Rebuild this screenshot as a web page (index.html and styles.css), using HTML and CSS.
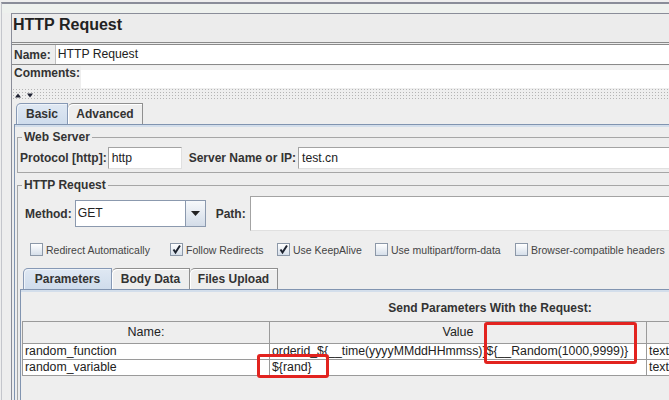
FILE: index.html
```html
<!DOCTYPE html>
<html lang="en">
<head>
<meta charset="utf-8">
<title>HTTP Request</title>
<link rel="stylesheet" href="styles.css">
</head>
<body>
<div class="app">
  <div class="topstrip"></div>
  <div class="panel">
    <div class="title">HTTP Request</div>
    <div class="row name-row">
      <span class="lbl">Name:</span>
      <div class="field name-field">HTTP Request</div>
    </div>
    <div class="row comments-row">
      <span class="lbl">Comments:</span>
      <div class="field comments-field"></div>
    </div>
    <div class="splitter">
      <svg class="split-arrows" width="18" height="5" viewBox="0 0 18 5"><path d="M0 4.5 L3 0.5 L6 4.5 Z"/><path d="M12 0.5 L18 0.5 L15 4.5 Z"/></svg>
    </div>
    <div class="tabs outer-tabs">
      <div class="tab sel t-basic">Basic</div>
      <div class="tab t-adv">Advanced</div>
    </div>
    <div class="tabbody outer-body">
      <fieldset class="group ws">
        <legend>Web Server</legend>
        <div class="frow">
          <span class="lbl">Protocol [http]:</span>
          <div class="field tf proto">http</div>
          <span class="lbl server-lbl">Server Name or IP:</span>
          <div class="field tf server">test.cn</div>
        </div>
      </fieldset>
      <fieldset class="group hr">
        <legend>HTTP Request</legend>
        <div class="method-row">
          <span class="lbl">Method:</span>
          <div class="combo">
            <div class="combo-text">GET</div>
            <div class="combo-btn"><svg width="9" height="5" viewBox="0 0 9 5"><path d="M0 0 H9 L4.5 5 Z"/></svg></div>
          </div>
          <span class="lbl path-lbl">Path:</span>
          <div class="field tf path"></div>
        </div>
        <div class="checks">
          <div class="chk c1"><span class="box"></span>Redirect Automatically</div>
          <div class="chk c2"><span class="box"><svg width="11" height="11" viewBox="0 0 11 11"><path d="M2.5 5.5 L4.5 8.5 L9 1.5"/></svg></span>Follow Redirects</div>
          <div class="chk c3"><span class="box"><svg width="11" height="11" viewBox="0 0 11 11"><path d="M2.5 5.5 L4.5 8.5 L9 1.5"/></svg></span>Use KeepAlive</div>
          <div class="chk c4"><span class="box"></span>Use multipart/form-data</div>
          <div class="chk c5"><span class="box"></span>Browser-compatible headers</div>
        </div>
        <div class="tabs inner-tabs">
          <div class="tab sel t-params">Parameters</div>
          <div class="tab t-body">Body Data</div>
          <div class="tab t-files">Files Upload</div>
        </div>
        <div class="tabbody inner-body">
          <div class="heading">Send Parameters With the Request:</div>
          <table class="params">
            <colgroup><col class="col-name"><col class="col-value"><col class="col-ct"></colgroup>
            <thead>
              <tr><th>Name:</th><th>Value</th><th></th></tr>
            </thead>
            <tbody>
              <tr><td>random_function</td><td>orderid_${__time(yyyyMMddHHmmss)}${__Random(1000,9999)}</td><td>text/plain</td></tr>
              <tr><td>random_variable</td><td>${rand}</td><td>text/plain</td></tr>
            </tbody>
          </table>
        </div>
      </fieldset>
    </div>
  </div>
</div>
<div class="mark mark-value"></div>
<div class="mark mark-rand"></div>
</body>
</html>
```

FILE: styles.css
```css
* { box-sizing: border-box; }
html, body { margin: 0; padding: 0; }
body {
  background: #eeeeee;
  font-family: "Liberation Sans", Arial, sans-serif;
  color: #333;
  width: 669px;
  height: 400px;
  overflow: hidden;
  position: relative;
}
.app {
  width: 1000px;
  margin-top: 2px;
  border-top: 2px solid #8a8d99;
  border-left: 1px solid #c4c6cc;
  margin-left: 1px;
}
.topstrip { height: 9px; background: #eef1ee; }
.panel {
  margin-left: 9px;
  border-left: 1px solid #8a8d99;
  border-top: 1px solid #8a8d99;
}
.title {
  height: 31px;
  line-height: 22px;
  font-size: 16px;
  font-weight: bold;
  padding-left: 1px;
  color: #222;
  background: #ececec;
  border-bottom: 3px double #8a8a8a;
}
.row { display: flex; padding-left: 2px; }
.lbl { font-weight: bold; font-size: 12px; white-space: nowrap; color: #333; }
.field { background: #fff; font-size: 12.2px; white-space: nowrap; color: #222; }
.name-row { height: 20px; align-items: center; border-bottom: 1px solid #8a8a8a; }
.name-field {
  flex: 1; height: 19px; line-height: 19px; margin-left: 4px;
  padding-left: 2px; border-left: 1px solid #c0c0c0;
}
.comments-row { height: 23px; align-items: flex-start; }
.comments-row .lbl { padding-top: 1px; line-height: 14px; }
.comments-field {
  flex: 1; height: 22px; margin-left: 1px; margin-top: 1px;
  border-top: 4px solid #f2f2f2;
}
.splitter {
  height: 13px;
  background-image: radial-gradient(circle, #b4b4b4 0.6px, transparent 1px);
  background-size: 3px 3px;
  padding: 5px 0 0 3px;
}
.split-arrows { display: block; fill: #1f2233; }

/* tabs */
.tabs { display: flex; align-items: flex-end; }
.tab {
  height: 21px;
  line-height: 20px;
  font-size: 12px;
  font-weight: bold;
  text-align: center;
  color: #333;
  background: #eeeeee;
  border: 1px solid #8f8f8f;
  border-bottom: none;
  border-top-left-radius: 5px;
  box-shadow: inset 1px 1px 0 #ffffff;
}
.tab + .tab { border-left: none; }
.tab.sel {
  background: linear-gradient(#dfe8f3, #cfdcec);
  border-color: #8799b5;
  box-shadow: inset 1px 1px 0 #eef3f9;
}
.tabbody {
  border-top: 1px solid #8194b0;
  border-left: 1px solid #8194b0;
  box-shadow: inset 0 2px 0 #d3deeb;
}
.outer-tabs { height: 23px; margin-left: 2px; padding-left: 2px; }
.t-basic { width: 52px; }
.t-adv { width: 75px; }
.outer-body { margin-left: 2px; padding: 5px 0 0 2px; }

/* titled groups */
fieldset.group {
  margin: 0;
  min-width: 0;
  padding: 3px 0 3px 2px;
  border: 1px solid #a6a6a6;
}
fieldset.group legend {
  font-weight: bold;
  font-size: 12px;
  line-height: 14px;
  padding: 0 2px;
  margin-left: 2px;
  color: #333;
}
.frow { display: flex; align-items: center; height: 22px; }
.tf {
  height: 22px;
  line-height: 20px;
  border: 1px solid #a3a3a3;
  border-right-color: #e0e0e0;
  border-bottom-color: #e0e0e0;
  padding-left: 3px;
}
.proto { width: 74px; margin-left: 1px; }
.server-lbl { margin-left: 7px; }
.server { flex: 1; margin-left: 2px; }

.hr { margin-top: 5px !important; padding: 4px 0 0 2px !important; }
.method-row { display: flex; align-items: center; height: 35px; padding-left: 5px; }
.combo {
  display: flex;
  width: 131px;
  height: 27px;
  margin-left: 3px;
  border: 1px solid #8b99ae;
  background: #fff;
}
.combo-text { flex: 1; font-size: 12.2px; line-height: 25px; padding-left: 2px; color: #222; }
.combo-btn {
  width: 20px;
  border-left: 1px solid #8b99ae;
  background: linear-gradient(#f7f9fb, #d3dce8);
  display: flex;
  align-items: center;
  justify-content: center;
}
.combo-btn svg { fill: #222; }
.path-lbl { margin-left: 10px; }
.path { flex: 1; height: 35px; margin-left: 4px; }

.checks { display: flex; margin-top: 12px; height: 13px; padding-left: 10px; }
.chk {
  display: flex;
  align-items: center;
  font-size: 10.5px;
  color: #444;
  white-space: nowrap;
}
.box {
  width: 13px;
  height: 13px;
  margin-right: 3px;
  border: 1px solid #8c98a8;
  background: linear-gradient(#ffffff, #d6dfea);
  display: flex;
  align-items: center;
  justify-content: center;
}
.box svg { fill: none; stroke: #1e2430; stroke-width: 2; }
.c1 { width: 140px; }
.c2 { width: 107px; }
.c3 { width: 98px; }
.c4 { width: 140px; }

.inner-tabs { height: 21px; margin-top: 12px; padding-left: 3px; }
.t-params { width: 89px; }
.t-body { width: 78px; }
.t-files { width: 88px; }
.inner-body { padding: 11px 0 30px 1px; }
.heading {
  width: 936px;
  text-align: center;
  font-weight: bold;
  font-size: 12px;
  line-height: 14px;
  color: #333;
}
.params {
  margin-top: 6px;
  border-collapse: separate;
  border-spacing: 0;
  table-layout: fixed;
  width: 925px;
  border-top: 1px solid #9a9a9a;
  border-left: 1px solid #9a9a9a;
  font-size: 12.3px;
}
.col-name { width: 247px; }
.col-value { width: 377px; }
.col-ct { width: 300px; }
.params th, .params td {
  border-right: 1px solid #9a9a9a;
  border-bottom: 1px solid #9a9a9a;
  padding: 0 0 0 2px;
  white-space: nowrap;
  overflow: hidden;
  color: #222;
}
.params th {
  font-weight: normal;
  font-size: 12.5px;
  line-height: 21px;
  background: #eeeeee;
  text-align: center;
  padding: 0;
}
.params td { line-height: 15px; background: #fff; }

/* annotation marks */
.mark {
  position: absolute;
  border: 3px solid #e2231f;
  border-radius: 3px;
}
.mark-value { left: 484px; top: 322px; width: 153px; height: 42px; }
.mark-rand { left: 257px; top: 354px; width: 72px; height: 24px; }
```
